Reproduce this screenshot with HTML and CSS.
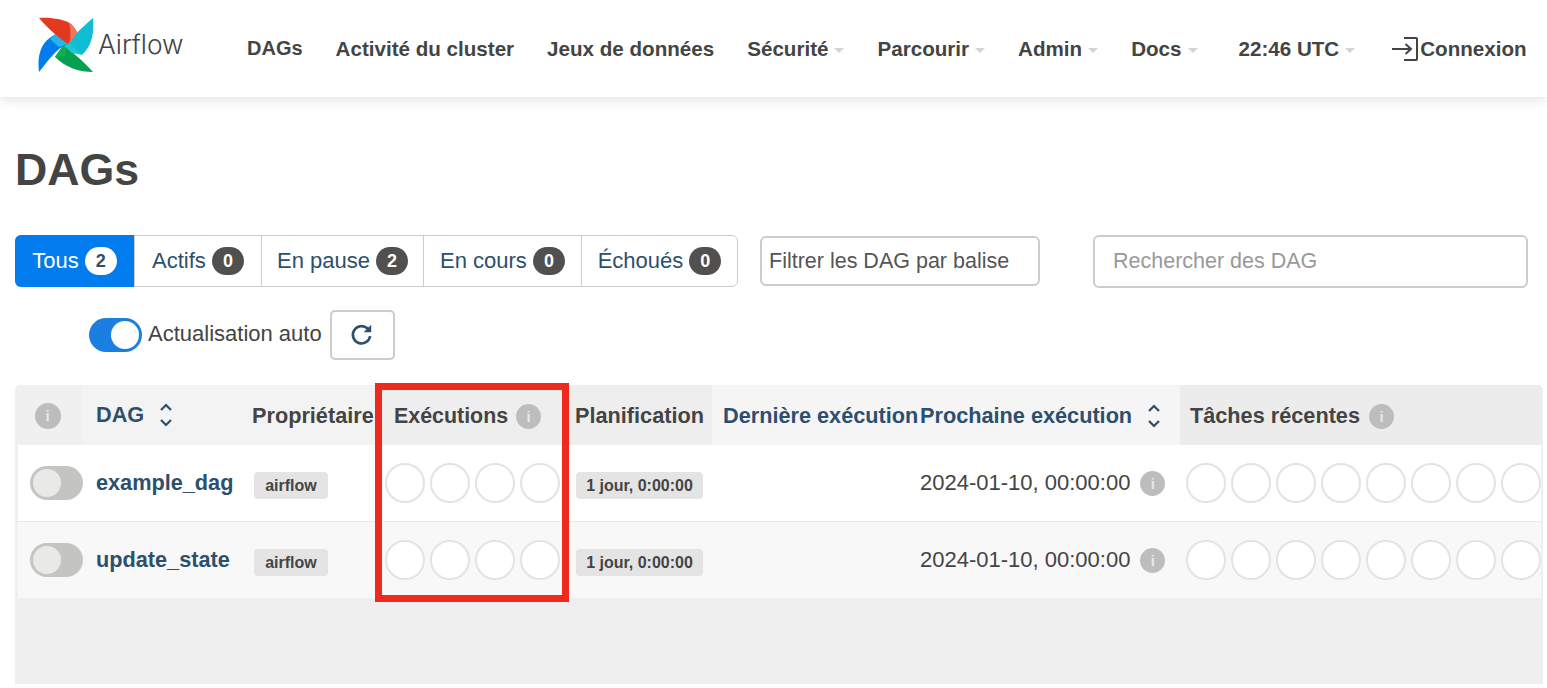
FILE: index.html
```html
<!DOCTYPE html>
<html lang="fr">
<head>
<meta charset="utf-8">
<title>DAGs - Airflow</title>
<link rel="stylesheet" href="styles.css">
</head>
<body>
<nav class="nav">
  <a class="brand">
    <svg class="brand-mark" viewBox="0 0 56 56" width="56" height="56">
      <path fill="#017cee" d="M1 55C-1 38 3 25 16 18L33 27L24 30C15 36 10 44 1 55Z"/>
      <path fill="#25b5ea" d="M17 17L31 27L21 30L12 22Z"/>
      <path fill="#04a04f" d="M55 55C42 55 28 51 17 40L24 30L28 27C33 36 44 42 55 55Z"/>
      <path fill="#0fb04a" d="M17 40L24 30L29 28L27 39Z"/>
      <path fill="#11bdd4" d="M55 1C56 14 55 28 44 38L28 28L31 24C38 16 46 9 55 1Z"/>
      <path fill="#1ec6d6" d="M31 26L44 38L34 36L26 29Z"/>
      <path fill="#e43921" d="M1 1C12 0 26 2 33 7C36 10 38 13 39 16L30 27C24 23 12 14 1 1Z"/>
      <path fill="#f4735c" d="M31 6C36 10 39 13 39 16L31 27C33 20 33 13 31 6Z"/>
    </svg>
    <span class="brand-name">Airflow</span>
  </a>
  <ul class="menu">
    <li class="menu-item menu-first">DAGs</li>
    <li class="menu-item">Activité du cluster</li>
    <li class="menu-item">Jeux de données</li>
    <li class="menu-item">Sécurité<span class="caret"></span></li>
    <li class="menu-item">Parcourir<span class="caret"></span></li>
    <li class="menu-item">Admin<span class="caret"></span></li>
    <li class="menu-item menu-docs">Docs<span class="caret"></span></li>
    <li class="menu-item menu-time">22:46 UTC<span class="caret"></span></li>
    <li class="menu-item menu-login">
      <svg class="login-icon" viewBox="0 0 28 24" width="28" height="24">
        <path d="M13 1H25Q26 1 26 2V22Q26 23 25 23H13M1 12H20M14.5 7L20 12L14.5 17"/>
      </svg>Connexion
    </li>
  </ul>
</nav>

<main class="page">
  <h1 class="title">DAGs</h1>

  <section class="filters">
    <div class="tabs">
      <a class="tab tab-active">Tous <span class="count count-light">2</span></a>
      <a class="tab">Actifs <span class="count">0</span></a>
      <a class="tab">En pause <span class="count">2</span></a>
      <a class="tab">En cours <span class="count">0</span></a>
      <a class="tab">Échoués <span class="count">0</span></a>
    </div>
    <input class="field field-tags" placeholder="Filtrer les DAG par balise">
    <input class="field field-search" placeholder="Rechercher des DAG">
  </section>

  <section class="refresh">
    <span class="switch switch-on"><span class="knob"></span></span>
    <span class="refresh-label">Actualisation auto</span>
    <button class="refresh-btn" aria-label="Actualiser">
      <svg viewBox="0 0 24 24" width="26" height="26"><path class="refresh-arc" d="M19.5 13a8 8 0 1 1-2.6-7.2L19 8"/><path class="refresh-head" d="M20.5 2.5V9.5H13.5Z"/></svg>
    </button>
  </section>

  <section class="table">
    <div class="row row-head">
      <div class="cell"><span class="info info-first">i</span></div>
      <div class="cell cell-dag link">DAG
        <svg class="sort" viewBox="0 0 14 24" width="14" height="24"><path d="M2 7L7 2L12 7M2 17L7 22L12 17"/></svg>
      </div>
      <div class="cell cell-owner">Propriétaire</div>
      <div class="cell cell-runs">Exécutions <span class="info">i</span></div>
      <div class="cell cell-plan">Planification</div>
      <div class="cell cell-last link">Dernière exécution</div>
      <div class="cell cell-next link">Prochaine exécution
        <svg class="sort" viewBox="0 0 14 24" width="14" height="24"><path d="M2 7L7 2L12 7M2 17L7 22L12 17"/></svg>
      </div>
      <div class="cell cell-tasks">Tâches récentes <span class="info">i</span></div>
    </div>

    <div class="row row-body">
      <div class="cell cell-toggle"><span class="switch"><span class="knob"></span></span></div>
      <div class="cell cell-dag dag-name">example_dag</div>
      <div class="cell cell-pill"><span class="pill pill-owner">airflow</span></div>
      <div class="cell cell-circles"><i class="dot"></i><i class="dot"></i><i class="dot"></i><i class="dot"></i></div>
      <div class="cell cell-pill cell-plan-body"><span class="pill pill-plan">1 jour, 0:00:00</span></div>
      <div class="cell"></div>
      <div class="cell cell-date">2024-01-10, 00:00:00 <span class="info">i</span></div>
      <div class="cell cell-circles cell-tasks-body"><i class="dot"></i><i class="dot"></i><i class="dot"></i><i class="dot"></i><i class="dot"></i><i class="dot"></i><i class="dot"></i><i class="dot"></i></div>
    </div>

    <div class="row row-body row-alt">
      <div class="cell cell-toggle"><span class="switch"><span class="knob"></span></span></div>
      <div class="cell cell-dag dag-name">update_state</div>
      <div class="cell cell-pill"><span class="pill pill-owner">airflow</span></div>
      <div class="cell cell-circles"><i class="dot"></i><i class="dot"></i><i class="dot"></i><i class="dot"></i></div>
      <div class="cell cell-pill cell-plan-body"><span class="pill pill-plan">1 jour, 0:00:00</span></div>
      <div class="cell"></div>
      <div class="cell cell-date">2024-01-10, 00:00:00 <span class="info">i</span></div>
      <div class="cell cell-circles cell-tasks-body"><i class="dot"></i><i class="dot"></i><i class="dot"></i><i class="dot"></i><i class="dot"></i><i class="dot"></i><i class="dot"></i><i class="dot"></i></div>
    </div>

    <div class="highlight"></div>
  </section>
</main>
</body>
</html>
```

FILE: styles.css
```css
* { box-sizing: border-box; }

html, body { margin: 0; padding: 0; background: #fff; }

body {
  font-family: "Liberation Sans", Arial, sans-serif;
  color: #444;
  height: 688px;
  overflow: hidden;
}

/* Navigation */
.nav {
  display: flex;
  align-items: center;
  height: 97px;
  padding-left: 38px;
  background: #fff;
  box-shadow: 0 2px 12px rgba(0, 0, 0, .13);
}

.brand {
  display: flex;
  align-items: center;
  width: 209px;
  height: 56px;
  margin-top: -7px;
}

.brand-mark { flex: none; }

.brand-name {
  margin-left: 4px;
  margin-top: -2px;
  font-family: Inter, "Liberation Sans", sans-serif;
  font-weight: 300;
  font-size: 26.3px;
  color: #444;
}

.menu {
  display: flex;
  align-items: center;
  gap: 33px;
  margin: 0;
  padding: 0;
  list-style: none;
}

.menu-item {
  display: flex;
  align-items: center;
  font-size: 20.6px;
  font-weight: bold;
  color: #444;
  white-space: nowrap;
}

.menu-first { font-size: 20px; }

.caret {
  width: 0;
  height: 0;
  margin: 3px 0 0 6px;
  border-left: 5px solid transparent;
  border-right: 5px solid transparent;
  border-top: 5px solid #d6d3d6;
}

.menu-time { margin-left: 8px; }
.menu-login { margin-left: 3px; }

.login-icon { margin-right: 1px; }

.login-icon path {
  fill: none;
  stroke: #444;
  stroke-width: 2;
}

/* Page */
.page {
  padding: 0 4px 0 15px;
}

.title {
  margin: 48px 0 0;
  font-size: 44.7px;
  line-height: 50px;
  font-weight: bold;
  color: #444;
}

/* Filters */
.filters {
  display: flex;
  align-items: center;
  height: 52px;
  margin-top: 40px;
  padding-right: 15px;
}

.tabs {
  display: flex;
  flex: none;
  width: 723px;
  height: 52px;
  border: 1px solid #ccc;
  border-radius: 6px;
}

.tab {
  display: flex;
  align-items: center;
  justify-content: center;
  gap: 6px;
  font-size: 22px;
  color: #2c4f6e;
  border-left: 1px solid #ccc;
  white-space: pre;
}

.tab:nth-child(1) { width: 119px; }
.tab:nth-child(2) { width: 127px; }
.tab:nth-child(3) { width: 162px; }
.tab:nth-child(4) { width: 158px; }
.tab:nth-child(5) { width: 156px; }

.tab-active {
  margin: -1px 0 -1px -1px;
  height: 52px;
  background: #017cee;
  border: 0;
  border-radius: 6px 0 0 6px;
  color: #fff;
}

.count {
  display: inline-block;
  min-width: 32px;
  height: 28px;
  margin-left: -6px;
  padding: 0 6px;
  border-radius: 14px;
  background: #51504f;
  color: #fff;
  font-size: 18px;
  font-weight: bold;
  line-height: 28px;
  text-align: center;
}

.count-light {
  background: #fff;
  color: #2c4f6e;
}

.field {
  display: block;
  flex: none;
  border: 2px solid #ccc;
  border-radius: 6px;
  background: #fff;
  font-family: "Liberation Sans", Arial, sans-serif;
  font-size: 21.5px;
  outline: 0;
}

.field-tags {
  width: 280px;
  height: 50px;
  margin-left: 22px;
  padding: 0 7px;
}

.field-tags::placeholder { color: #555; opacity: 1; }

.field-search {
  width: 435px;
  height: 53px;
  margin-left: 53px;
  padding: 0 18px;
}

.field-search::placeholder { color: #999; opacity: 1; }

/* Auto refresh */
.refresh {
  display: flex;
  align-items: center;
  height: 50px;
  margin-top: 23px;
  padding-left: 74px;
}

.switch {
  display: inline-block;
  position: relative;
  flex: none;
  width: 53px;
  height: 34px;
  border-radius: 17px;
  background: #c4c4c2;
}

.switch-on { background: #1a7fe0; }

.knob {
  position: absolute;
  left: 3px;
  top: 3px;
  width: 28px;
  height: 28px;
  border-radius: 50%;
  background: #e9e9e8;
}

.switch-on .knob {
  left: 22px;
  background: #fff;
}

.refresh-label {
  margin-left: 6px;
  margin-bottom: 3px;
  font-size: 22px;
  color: #444;
}

.refresh-btn {
  display: flex;
  align-items: center;
  justify-content: center;
  width: 65px;
  height: 50px;
  margin-left: 8px;
  padding: 0;
  background: #fff;
  border: 2px solid #ccc;
  border-radius: 5px;
}

.refresh-arc {
  fill: none;
  stroke: #2c4f6e;
  stroke-width: 2.4;
}

.refresh-head { fill: #2c4f6e; }

/* Table */
.table {
  position: relative;
  height: 299px;
  margin-top: 25px;
  padding: 0 2px 0 3px;
  background: #efefef;
  border-radius: 5px 5px 0 0;
}

.row {
  display: grid;
  grid-template-columns: 65px 160px 135px 189px 145px 207px 261px 1fr;
}

.cell {
  display: flex;
  align-items: center;
  min-width: 0;
  white-space: nowrap;
}

.row-head {
  height: 60px;
  font-size: 21.7px;
  font-weight: bold;
  color: #444;
}

.row-head .cell { padding-top: 2px; }
.row-head .cell:nth-child(1) { justify-content: center; padding-right: 6px; background: #f0f0f0; }
.row-head .cell:nth-child(2),
.row-head .cell:nth-child(3) { background: #f3f3f3; }
.row-head .cell:nth-child(4),
.row-head .cell:nth-child(5) { background: #eeeeee; }
.row-head .cell:nth-child(6),
.row-head .cell:nth-child(7) { background: #f5f5f5; }
.row-head .cell:nth-child(8) { background: #ececec; }

.link { color: #2c4f6e; }

.row-head .cell-dag { padding-left: 13px; padding-top: 0; }
.cell-owner { padding-left: 9px; }
.row-head .cell-runs { padding-left: 16px; gap: 8px; font-size: 21.4px; }
.cell-plan { padding-left: 8px; }
.cell-last { padding-left: 11px; }
.cell-next { padding-left: 1px; }
.cell-tasks { padding-left: 10px; gap: 9px; }

.sort {
  flex: none;
  margin-left: 15px;
}

.sort path {
  fill: none;
  stroke: #2c4f6e;
  stroke-width: 2.2;
}

.info {
  display: inline-block;
  flex: none;
  width: 25px;
  height: 25px;
  border-radius: 50%;
  background: #bdbdbd;
  color: #e8e8e8;
  font-size: 15px;
  font-weight: bold;
  line-height: 25px;
  text-align: center;
}

.info-first { width: 26px; height: 26px; line-height: 26px; }

.row-body {
  height: 77px;
  background: #fff;
  border-bottom: 1px solid #e9e9e9;
}

.row-alt {
  height: 76px;
  background: #f8f8f8;
  border-bottom: 0;
}

.cell-toggle { padding-left: 12px; }

.cell-dag.dag-name {
  padding-left: 13px;
  font-size: 21.7px;
  font-weight: bold;
  color: #2c4f6e;
}

.cell-pill { padding-left: 11px; padding-top: 5px; }
.cell-plan-body { padding-left: 9px; }

.pill {
  display: inline-block;
  height: 27px;
  border-radius: 4px;
  background: #e4e4e4;
  color: #444;
  font-size: 16px;
  font-weight: bold;
  line-height: 27px;
  text-align: center;
}

.pill-owner { width: 74px; }
.pill-plan { width: 127px; }

.cell-circles { gap: 5px; padding-left: 7px; }
.cell-tasks-body { padding-left: 6px; }

.dot {
  display: block;
  flex: none;
  width: 40px;
  height: 40px;
  border: 2px solid #e3e3e3;
  border-radius: 50%;
  background: #fff;
}

.cell-date {
  padding-left: 1px;
  gap: 10px;
  font-size: 22px;
  color: #444;
}

.highlight {
  position: absolute;
  left: 360px;
  top: -2px;
  width: 194px;
  height: 219px;
  border: 7px solid #ee2a1e;
  pointer-events: none;
}
```
